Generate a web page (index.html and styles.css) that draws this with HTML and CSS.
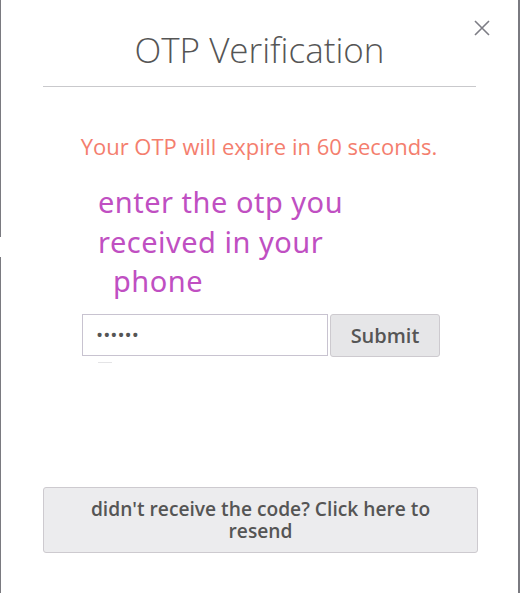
FILE: index.html
```html
<!DOCTYPE html>
<html>
<head>
<meta charset="utf-8">
<link rel="stylesheet" href="styles.css">
</head>
<body>
<div class="modal">
  <button class="close" aria-label="Close">
    <svg width="16" height="16" viewBox="0 0 16 16"><path d="M1 1L15 15M15 1L1 15" stroke="#7d7d85" stroke-width="1.6" fill="none"/></svg>
  </button>
  <div class="header">
    <h1 class="title">OTP Verification</h1>
  </div>
  <div class="body">
    <p class="expire">Your OTP will expire in 60 seconds.</p>
    <div class="prompt">
      <div class="line">enter the otp you</div>
      <div class="line">received in your</div>
      <div class="line indent">phone</div>
    </div>
    <div class="otp-row">
      <input class="otp-input" type="password" value="123456">
      <button class="submit">Submit</button>
    </div>
    <div class="tick"></div>
  </div>
  <div class="footer">
    <button class="resend">didn't receive the code? Click here to resend</button>
  </div>
</div>
</body>
</html>
```

FILE: styles.css
```css
html, body {
  margin: 0;
  padding: 0;
  background: #fff;
}
.modal {
  position: relative;
  width: 520px;
  height: 593px;
  box-sizing: border-box;
  border-right: 2px solid #7a7a80;
  background: linear-gradient(to bottom, #7a7a80 0 237px, transparent 237px 257px, #7a7a80 257px) left top / 1px 100% no-repeat, #fff;
  font-family: "Open Sans", sans-serif;
  color: #555;
  display: flex;
  flex-direction: column;
}
.close {
  position: absolute;
  top: 20px;
  left: 474px;
  width: 16px;
  height: 16px;
  padding: 0;
  border: 0;
  background: none;
  line-height: 0;
}
.header {
  margin: 0 42px 0 43px;
  padding-top: 26px;
  border-bottom: 1px solid #c9c9cc;
}
.title {
  margin: 0;
  text-align: center;
  font-size: 35px;
  font-weight: 300;
  line-height: 48px;
  padding-bottom: 12px;
  color: #555;
  white-space: nowrap;
}
.expire {
  margin: 0;
  padding-top: 44px;
  text-align: center;
  font-size: 22px;
  line-height: 30px;
  color: #f47e6e;
  white-space: nowrap;
}
.prompt {
  margin-top: 21px;
  padding-left: 98px;
  font-family: "Noto Sans", sans-serif;
  font-size: 29px;
  letter-spacing: 0.5px;
  color: #c04fc2;
  white-space: nowrap;
}
.line {
  line-height: 39.5px;
  height: 39.5px;
}
.indent {
  padding-left: 15px;
}
.otp-row {
  margin: 13px 0 0 82px;
  display: flex;
  gap: 2px;
}
.otp-input {
  box-sizing: border-box;
  width: 246px;
  height: 42px;
  margin: 0;
  padding: 0 13px;
  border: 1px solid #c8c3d0;
  background: #fff;
  font-size: 19px;
  color: #555;
  font-family: "Open Sans", sans-serif;
  outline: none;
}
.submit {
  box-sizing: border-box;
  width: 110px;
  height: 43px;
  margin: 0;
  border: 1px solid #cdcacf;
  border-radius: 3px;
  background: #e6e6e8;
  font-family: "Open Sans", sans-serif;
  font-size: 20px;
  font-weight: 600;
  color: #555;
}
.tick {
  margin: 5px 0 0 98px;
  width: 14px;
  height: 1px;
  background: #e4e4e6;
}
.footer {
  margin-top: auto;
  padding: 0 42px 40px 43px;
}
.resend {
  box-sizing: border-box;
  width: 435px;
  height: 66px;
  margin: 0;
  border: 1px solid #cdcacf;
  border-radius: 3px;
  background: #ececee;
  font-family: "Open Sans", sans-serif;
  font-size: 19.2px;
  font-weight: 600;
  line-height: 22px;
  color: #555;
  padding: 0 40px;
}
```
